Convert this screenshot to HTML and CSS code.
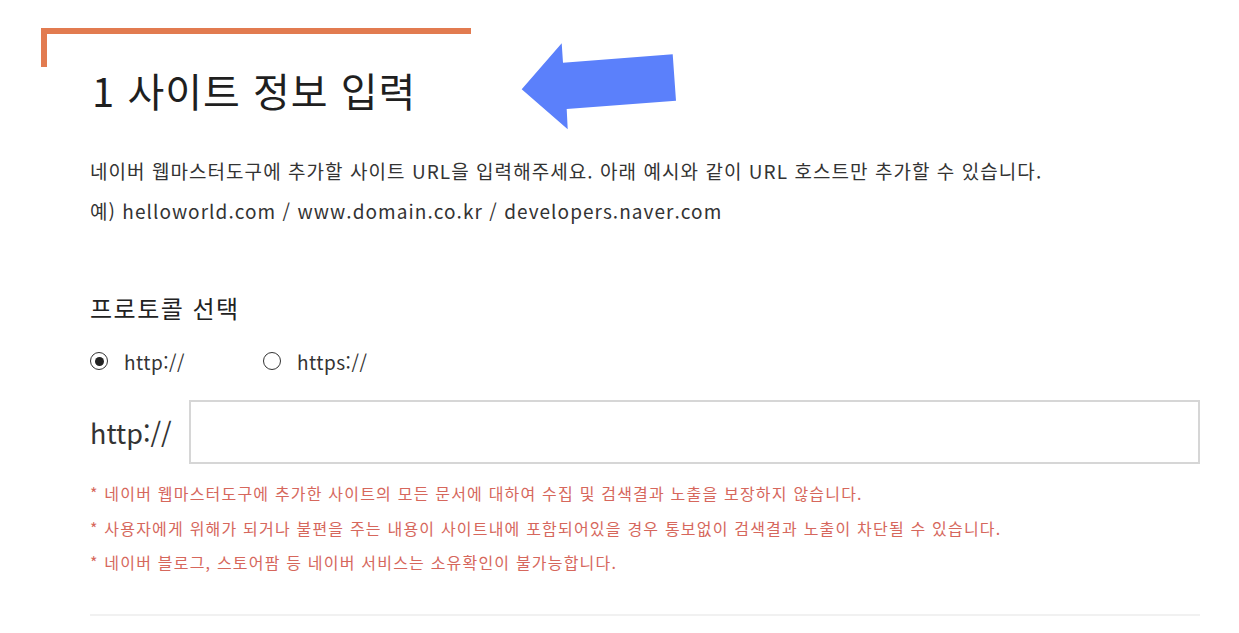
FILE: index.html
```html
<!DOCTYPE html>
<html lang="ko">
<head>
  <meta charset="UTF-8">
  <title>사이트 정보 입력</title>
  <link rel="stylesheet" href="styles.css">
</head>
<body>
  <div class="step">
    <div class="frame"></div>
    <h2 class="title">1 사이트 정보 입력</h2>
    <svg class="arrow" width="166" height="94" viewBox="0 0 166 94">
      <polygon points="6.7,49.3 46.7,3.3 48,22.7 157.7,14.3 161,60.7 51.7,69 52.7,89.3" fill="#5b80fb" />
    </svg>

    <div class="content">
      <p class="desc">네이버 웹마스터도구에 추가할 사이트 URL을 입력해주세요. 아래 예시와 같이 URL 호스트만 추가할 수 있습니다.</p>
      <p class="desc">예) helloworld.com / www.domain.co.kr / developers.naver.com</p>

      <h3 class="sub">프로토콜 선택</h3>
      <div class="radios">
        <label class="radio"><span class="dot on"></span>http://</label>
        <label class="radio"><span class="dot"></span>https://</label>
      </div>

      <div class="url-row">
        <span class="proto">http://</span>
        <input class="url" type="text">
      </div>

      <ul class="notes">
        <li>* 네이버 웹마스터도구에 추가한 사이트의 모든 문서에 대하여 수집 및 검색결과 노출을 보장하지 않습니다.</li>
        <li>* 사용자에게 위해가 되거나 불편을 주는 내용이 사이트내에 포함되어있을 경우 통보없이 검색결과 노출이 차단될 수 있습니다.</li>
        <li>* 네이버 블로그, 스토어팜 등 네이버 서비스는 소유확인이 불가능합니다.</li>
      </ul>
      <div class="divider"></div>
    </div>
  </div>
</body>
</html>
```

FILE: styles.css
```css
body {
  margin: 0;
  background: #fff;
  font-family: "Noto Sans CJK KR", "Noto Sans", sans-serif;
  color: #333;
}

.step {
  position: relative;
  padding-top: 28px;
}

.frame {
  margin-left: 41px;
  width: 424px;
  height: 33px;
  border-top: 6px solid #e27b50;
  border-left: 6px solid #e27b50;
}

.title {
  margin: -3px 0 0 92px;
  font-size: 40px;
  font-weight: 400;
  line-height: 52px;
  letter-spacing: 1px;
  color: #1f1f1f;
}

.arrow {
  position: absolute;
  left: 515px;
  top: 40px;
}

.content {
  margin-left: 90px;
  width: 1110px;
}

.desc {
  margin: 0;
  font-size: 19px;
  line-height: 40px;
  letter-spacing: 1.05px;
  color: #333;
}

.content .desc:first-child {
  margin-top: 35px;
}

.sub {
  margin: 61px 0 0;
  font-size: 24px;
  font-weight: 400;
  line-height: 32px;
  letter-spacing: 1.5px;
  color: #222;
}

.radios {
  display: flex;
  margin-top: 21px;
  height: 32px;
  align-items: center;
}

.radio {
  display: flex;
  align-items: center;
  width: 173px;
  font-size: 19px;
  letter-spacing: 0.5px;
  color: #333;
}

.dot {
  position: relative;
  width: 16px;
  height: 16px;
  border: 1.5px solid #333;
  border-radius: 50%;
  margin-right: 16px;
}

.dot.on::after {
  content: "";
  position: absolute;
  left: 3.5px;
  top: 3.5px;
  width: 9px;
  height: 9px;
  border-radius: 50%;
  background: #222;
}

.url-row {
  display: flex;
  align-items: center;
  margin-top: 23px;
}

.proto {
  width: 99px;
  font-size: 27px;
  color: #333;
}

.url {
  flex: 1;
  height: 64px;
  box-sizing: border-box;
  border: 2px solid #d6d6d6;
  outline: none;
  margin: 0;
}

.notes {
  list-style: none;
  margin: 12px 0 0;
  padding: 0;
}

.notes li {
  font-size: 16px;
  line-height: 34.5px;
  letter-spacing: 1.2px;
  color: #d6675c;
}

.divider {
  margin-top: 34px;
  height: 2px;
  background: #f1f1f1;
}
```
